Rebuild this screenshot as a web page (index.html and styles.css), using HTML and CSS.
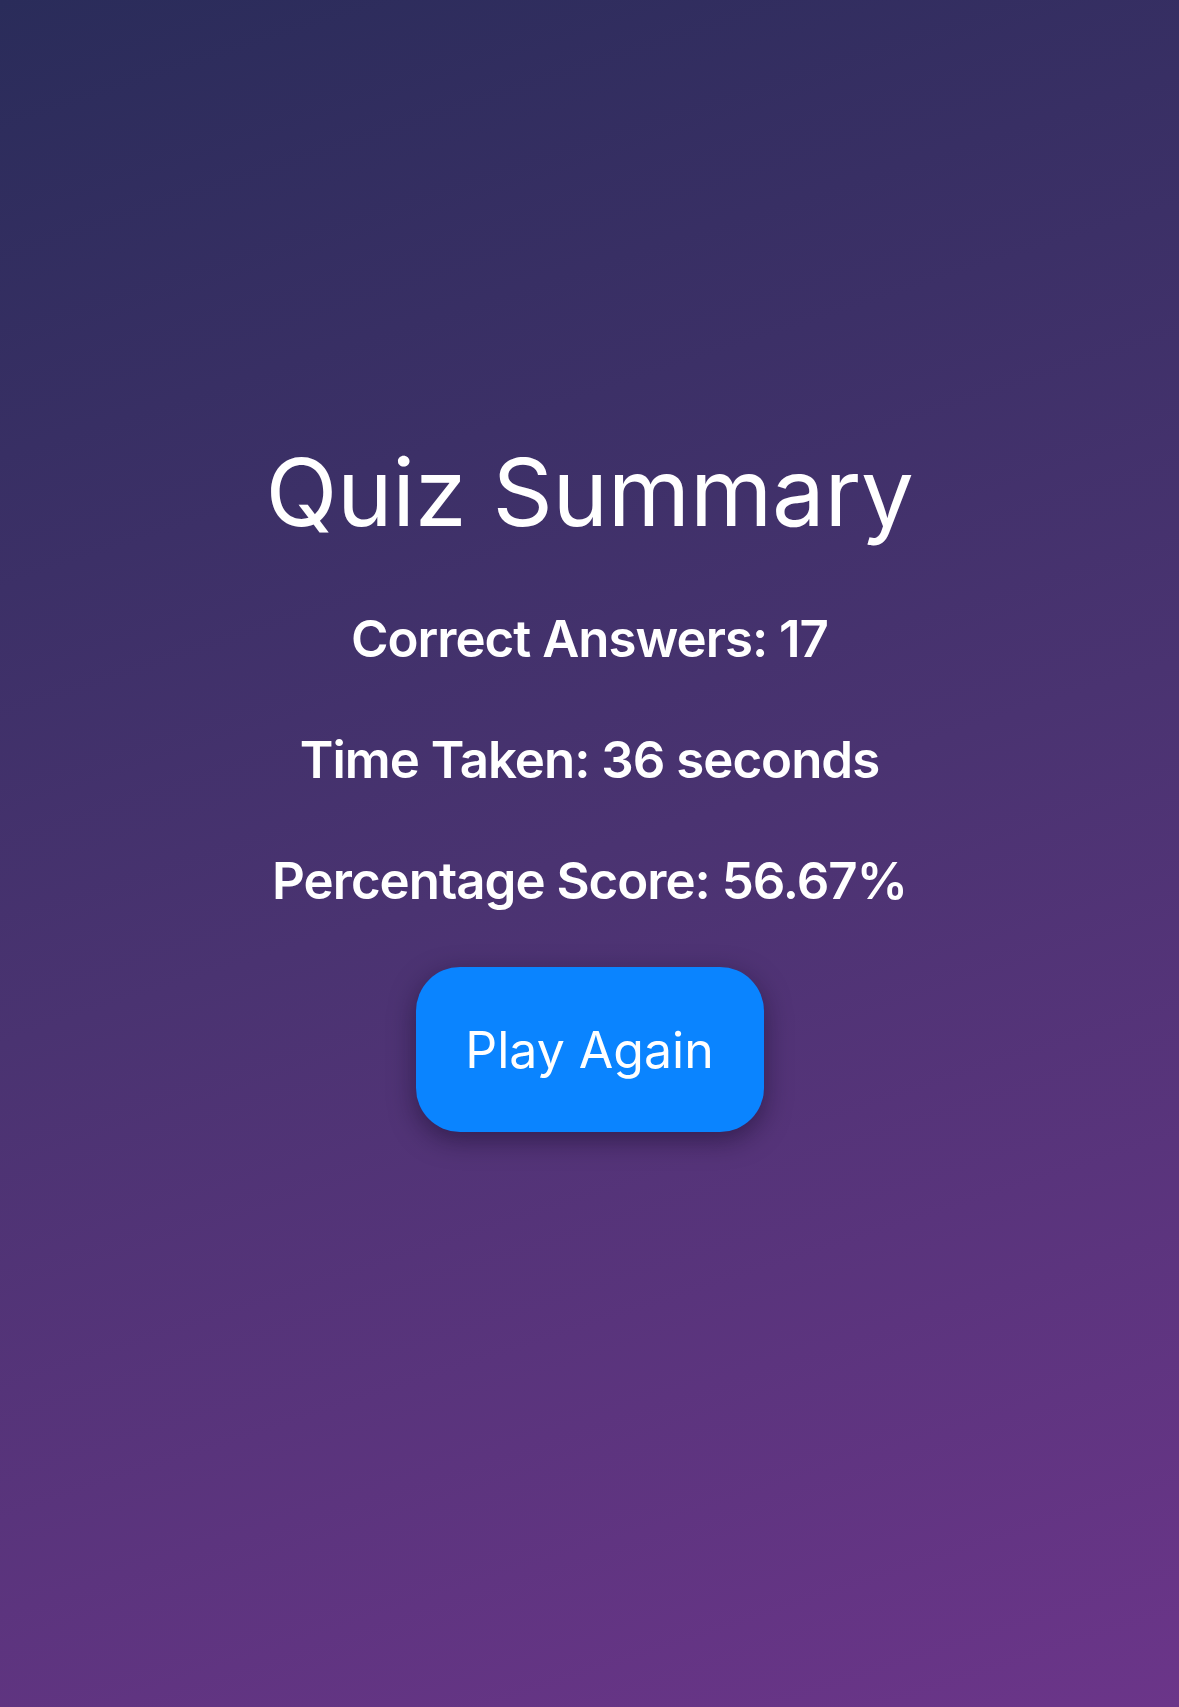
FILE: index.html
```html
<!DOCTYPE html>
<html lang="en">
<head>
<meta charset="utf-8">
<title>Quiz Summary</title>
<link rel="stylesheet" href="styles.css">
</head>
<body>
<main class="screen">
  <h1 class="title">Quiz Summary</h1>
  <div class="stats">
    <p class="stat">Correct Answers: 17</p>
    <p class="stat">Time Taken: 36 seconds</p>
    <p class="stat">Percentage Score: 56.67%</p>
  </div>
  <button class="play-btn" type="button">Play Again</button>
</main>
</body>
</html>
```

FILE: styles.css
```css
html, body {
  margin: 0;
  padding: 0;
}
body {
  width: 1179px;
  height: 1707px;
  background: linear-gradient(162deg, #2a2c5a 0%, #4a3371 50%, #6b3589 100%);
  font-family: Inter, "Noto Sans", sans-serif;
  color: #ffffff;
  overflow: hidden;
}
.screen {
  display: flex;
  flex-direction: column;
  align-items: center;
  padding-top: 428px;
}
.title {
  margin: 0;
  font-size: 94px;
  font-weight: 400;
  line-height: 128px;
  letter-spacing: -0.3px;
}
.stats {
  display: flex;
  flex-direction: column;
  align-items: center;
  margin-top: 22px;
}
.stat {
  margin: 0;
  font-size: 51px;
  font-weight: 600;
  line-height: 121px;
  letter-spacing: -1px;
}
.play-btn {
  margin-top: 26px;
  width: 348px;
  height: 165px;
  border: none;
  border-radius: 44px;
  background: #0a84ff;
  color: #ffffff;
  font-family: Inter, "Noto Sans", sans-serif;
  font-size: 50px;
  font-weight: 400;
  box-shadow: 0 8px 26px rgba(20, 10, 40, 0.5);
}
```
